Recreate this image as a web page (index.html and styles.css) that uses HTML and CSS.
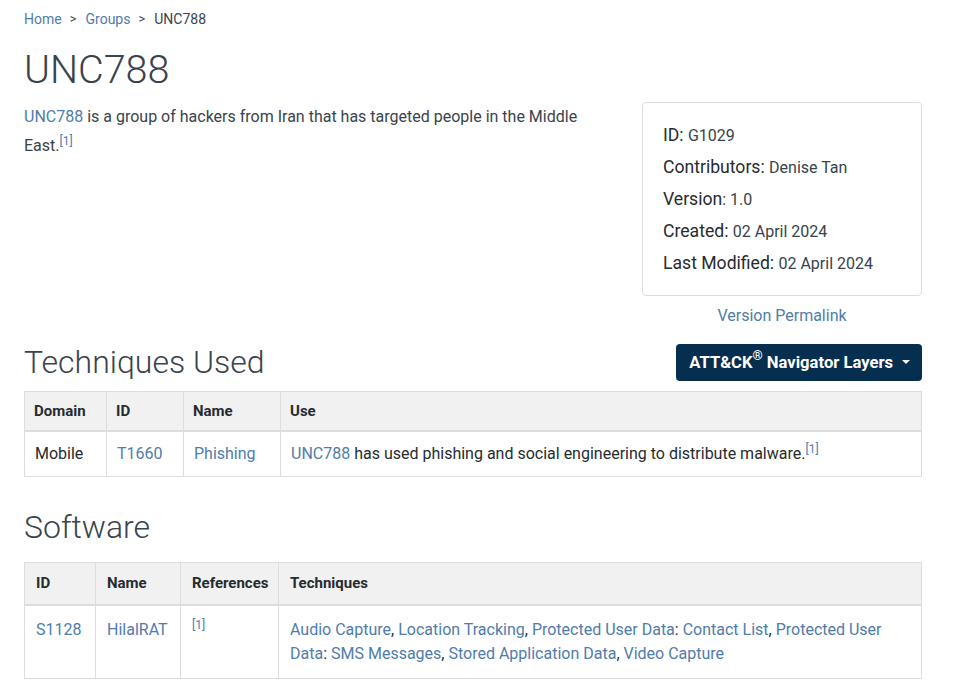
FILE: index.html
```html
<!DOCTYPE html>
<html lang="en">
<head>
<meta charset="utf-8">
<title>UNC788, Group G1029 | MITRE ATT&CK®</title>
<link rel="stylesheet" href="styles.css">
</head>
<body>
<div class="page">
  <nav class="breadcrumb">
    <a href="#">Home</a><span class="sep">&gt;</span><a href="#">Groups</a><span class="sep">&gt;</span><span class="current">UNC788</span>
  </nav>
  <h1 class="title">UNC788</h1>
  <div class="intro">
    <div class="description">
      <p><a href="#">UNC788</a> is a group of hackers from Iran that has targeted people in the Middle East.<sup><a href="#">[1]</a></sup></p>
    </div>
    <div class="side">
      <div class="card">
        <div class="card-row"><span class="label">ID:&nbsp;</span>G1029</div>
        <div class="card-row"><span class="label">Contributors:&nbsp;</span>Denise Tan</div>
        <div class="card-row"><span class="label">Version</span>:&nbsp;1.0</div>
        <div class="card-row"><span class="label">Created:&nbsp;</span>02 April 2024</div>
        <div class="card-row"><span class="label">Last Modified:&nbsp;</span>02 April 2024</div>
      </div>
      <a class="permalink" href="#">Version Permalink</a>
    </div>
  </div>

  <div class="section-head">
    <h2 class="section-title">Techniques Used</h2>
    <button class="nav-btn" type="button"><span class="btn-text">ATT&amp;CK<sup class="reg">®</sup> Navigator Layers</span><span class="caret"></span></button>
  </div>
  <table class="data techniques">
    <thead>
      <tr>
        <th class="c-domain">Domain</th>
        <th class="c-tid">ID</th>
        <th class="c-tname">Name</th>
        <th>Use</th>
      </tr>
    </thead>
    <tbody>
      <tr>
        <td>Mobile</td>
        <td><a href="#">T1660</a></td>
        <td><a href="#">Phishing</a></td>
        <td><a href="#">UNC788</a> has used phishing and social engineering to distribute malware.<sup><a href="#">[1]</a></sup></td>
      </tr>
    </tbody>
  </table>

  <h2 class="section-title software-title">Software</h2>
  <table class="data software">
    <thead>
      <tr>
        <th class="c-sid">ID</th>
        <th class="c-sname">Name</th>
        <th class="c-refs">References</th>
        <th>Techniques</th>
      </tr>
    </thead>
    <tbody>
      <tr>
        <td><a href="#">S1128</a></td>
        <td><a href="#">HilalRAT</a></td>
        <td><sup><a href="#">[1]</a></sup></td>
        <td><a href="#">Audio Capture</a>, <a href="#">Location Tracking</a>, <a href="#">Protected User Data</a>: <a href="#">Contact List</a>, <a href="#">Protected User Data</a>: <a href="#">SMS Messages</a>, <a href="#">Stored Application Data</a>, <a href="#">Video Capture</a></td>
      </tr>
    </tbody>
  </table>
</div>
</body>
</html>
```

FILE: styles.css
```css
* { box-sizing: border-box; }

html, body {
  margin: 0;
  padding: 0;
  background: #ffffff;
}

body {
  font-family: Roboto, "Liberation Sans", Arial, sans-serif;
  font-size: 16px;
  line-height: 1.5;
  color: #39434c;
}

a {
  color: #4f7cac;
  text-decoration: none;
}

sup {
  font-size: 75%;
  line-height: 0;
  position: relative;
  top: -0.5em;
  vertical-align: baseline;
}

.page {
  padding: 8px 34px 0 24px;
}

/* breadcrumb */
.breadcrumb {
  font-size: 14px;
  line-height: 22px;
  display: flex;
  align-items: center;
}
.breadcrumb .sep {
  padding: 0 9px 0 8px;
  font-size: 13px;
}
.breadcrumb .current {
  color: #39434c;
}

.title {
  margin: 16px 0 0;
  font-size: 39.5px;
  font-weight: 300;
  line-height: 48px;
  color: #39434c;
}

/* intro */
.intro {
  display: flex;
  justify-content: space-between;
  margin-top: 8px;
}
.description {
  width: 580px;
}
.description p {
  margin: 0;
  line-height: 29px;
}

.side {
  width: 280px;
  display: flex;
  flex-direction: column;
  align-items: center;
}
.card {
  width: 100%;
  border: 1px solid #dddddd;
  border-radius: 4px;
  padding: 16px 20px 16px;
}
.card-row {
  height: 32px;
  font-size: 16px;
  line-height: 32px;
  color: #39434c;
  white-space: nowrap;
}
.card-row .label {
  font-size: 17.6px;
  color: #262b30;
}
.permalink {
  margin-top: 9px;
  line-height: 22px;
}

/* section heads */
.section-head {
  display: flex;
  justify-content: space-between;
  align-items: center;
  margin-top: 16px;
}
.section-title {
  margin: 0;
  font-size: 32px;
  font-weight: 300;
  line-height: 38px;
  color: #39434c;
}
.nav-btn {
  font-family: inherit;
  font-size: 16.6px;
  font-weight: 700;
  color: #ffffff;
  background: #062f4f;
  border: 0;
  border-radius: 4px;
  height: 37px;
  padding: 0 12px 0 13px;
  display: flex;
  align-items: center;
}
.btn-text {
  display: inline-block;
  white-space: nowrap;
}
.nav-btn .reg {
  font-size: 13px;
  top: -0.55em;
}
.nav-btn .caret {
  display: inline-block;
  margin-left: 9px;
  width: 0;
  height: 0;
  border-top: 4.5px solid #ffffff;
  border-left: 4.5px solid transparent;
  border-right: 4.5px solid transparent;
}

/* tables */
.data {
  width: 100%;
  border-collapse: collapse;
  table-layout: fixed;
}
.data th, .data td {
  border: 1px solid #dddddd;
  text-align: left;
  vertical-align: top;
}
.data th {
  background: #f1f1f1;
  font-size: 15px;
  font-weight: 700;
  line-height: 21px;
  color: #262b30;
  border-bottom: 2px solid #dddddd;
}
.data td {
  line-height: 24px;
  color: #262b30;
}

.techniques {
  margin-top: 10px;
}
.techniques th {
  padding: 9px 9px 8px;
}
.techniques td {
  padding: 10px 10px 10px;
}
.c-domain { width: 82px; }
.c-tid { width: 77px; }
.c-tname { width: 97px; }

.software-title {
  margin-top: 31px;
}
.software {
  margin-top: 16px;
}
.software th {
  padding: 10px 11px;
}
.software td {
  padding: 12px 11px;
}
.c-sid { width: 71px; }
.c-sname { width: 85px; }
.c-refs { width: 98px; }
```
